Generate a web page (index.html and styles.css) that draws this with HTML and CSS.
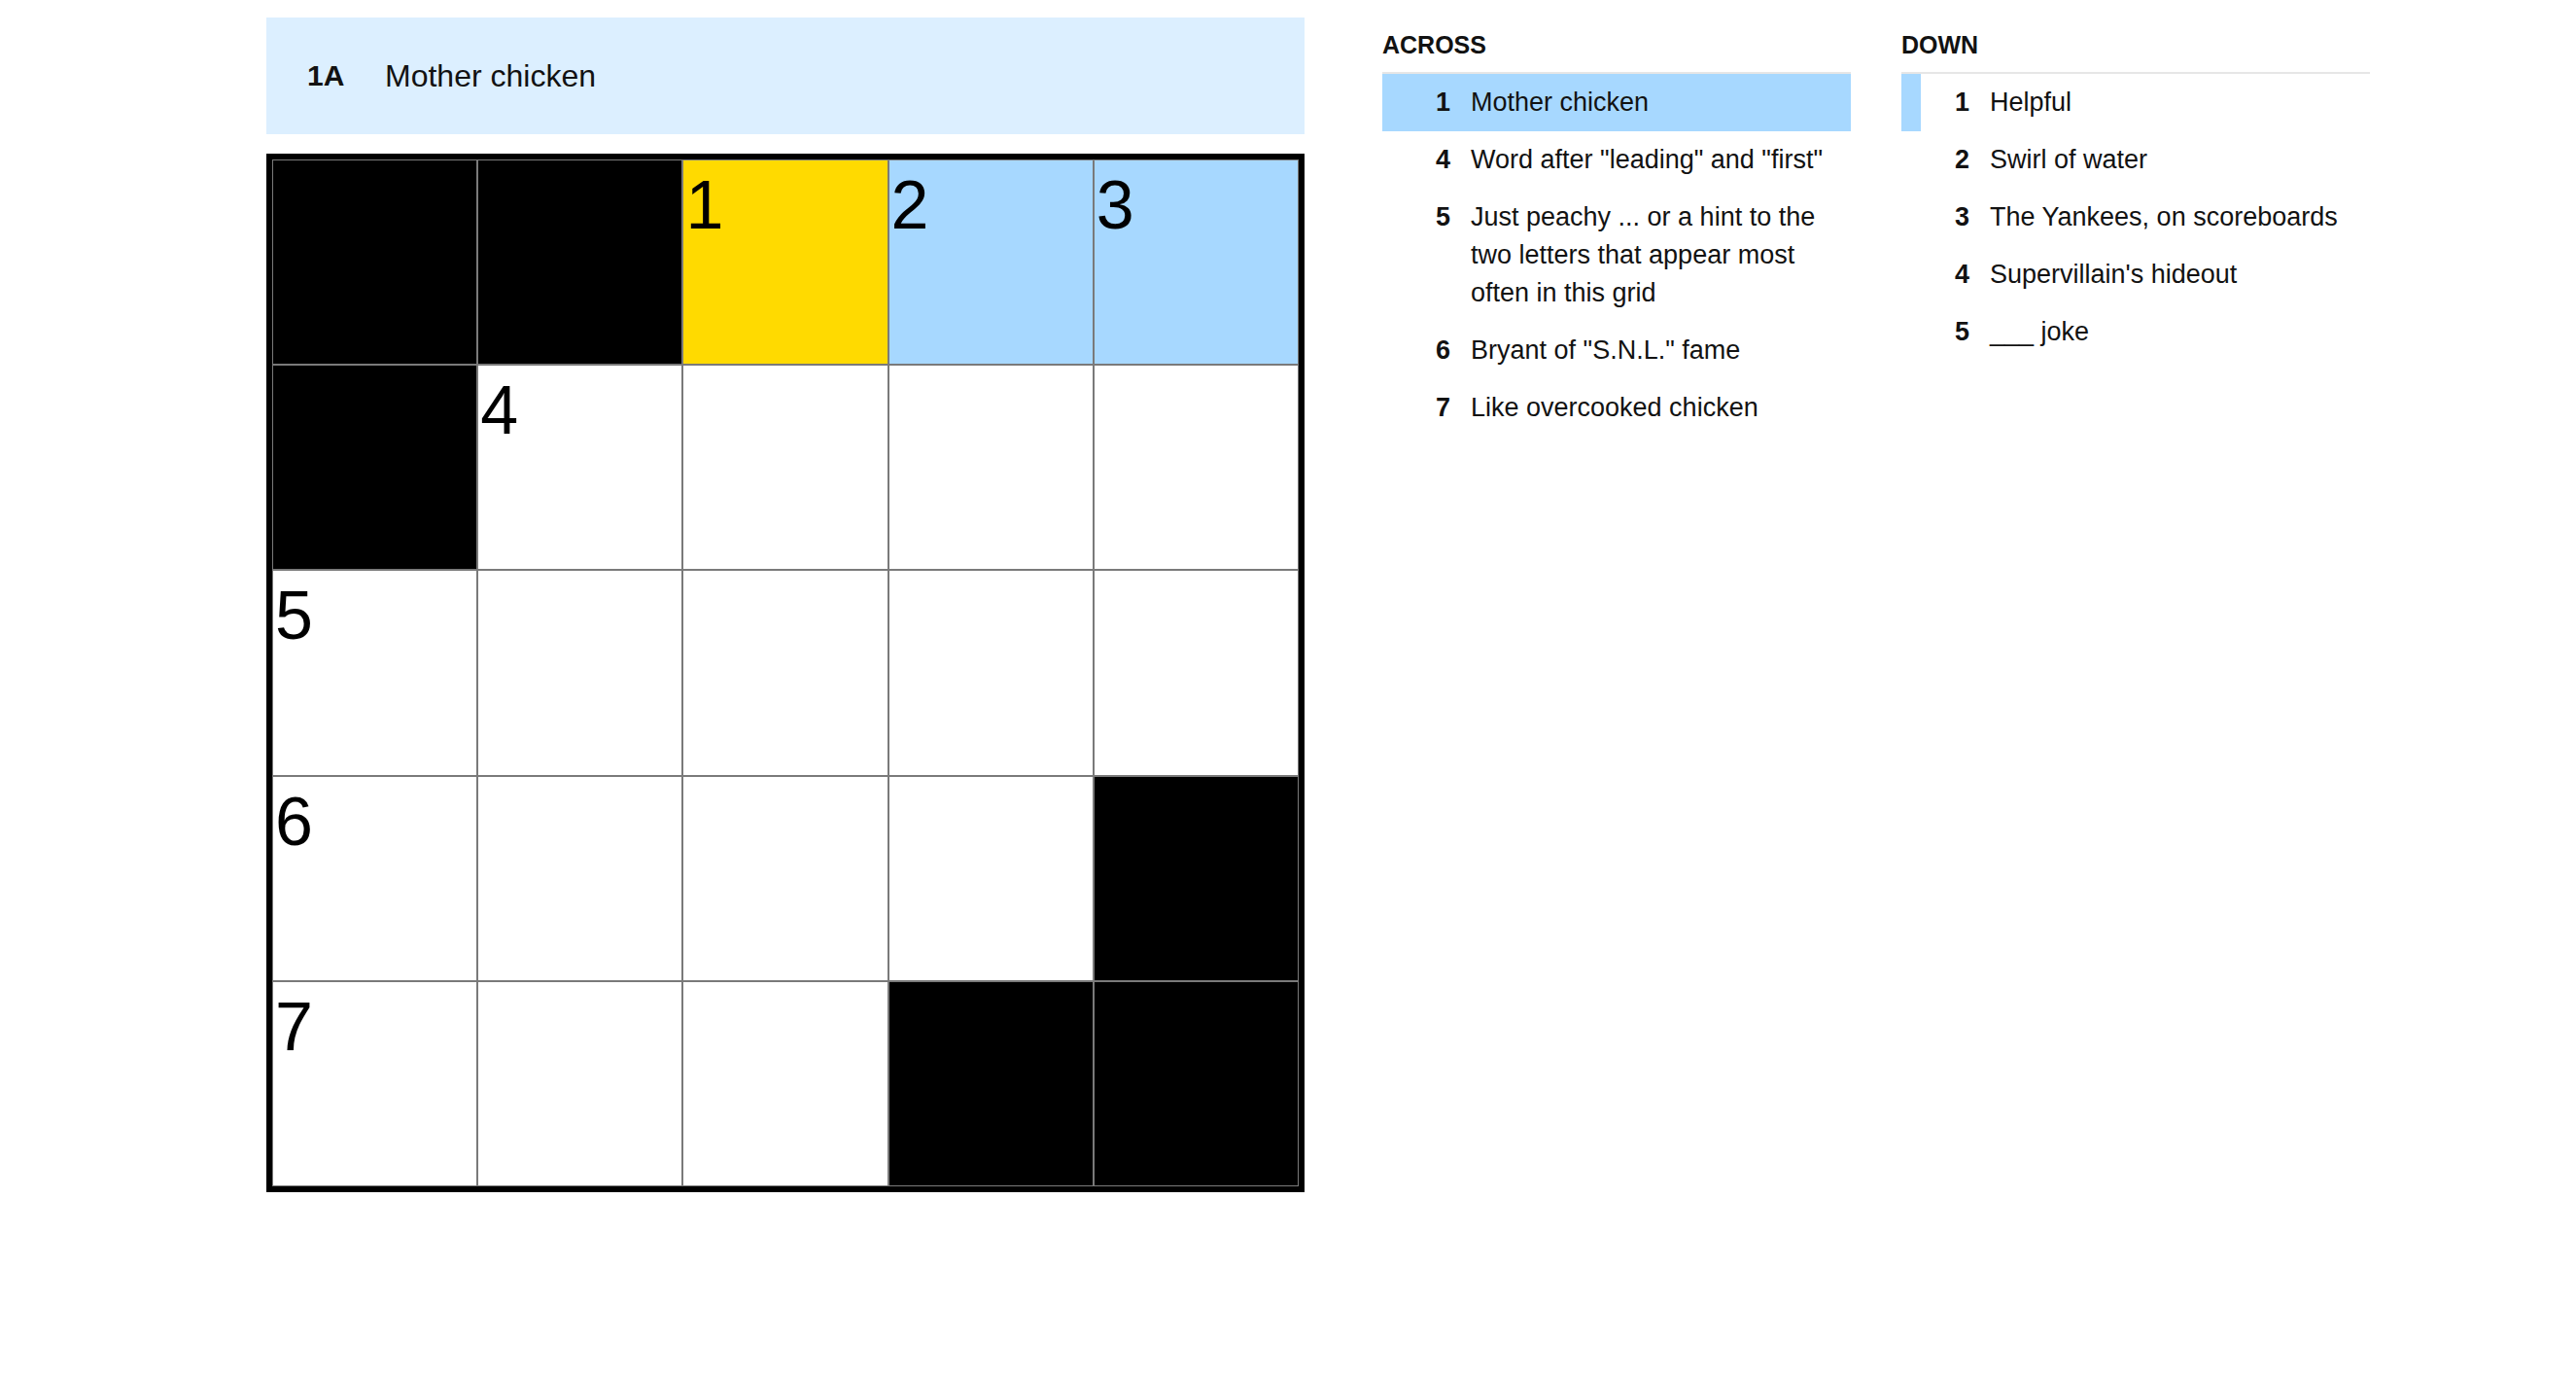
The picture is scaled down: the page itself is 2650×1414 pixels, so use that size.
FILE: index.html
```html
<!DOCTYPE html>
<html lang="en">
<head>
    <meta charset="UTF-8">
    <meta name="viewport" content="width=device-width, initial-scale=1.0">
    <title>The Mini Crossword</title>
    <link rel="stylesheet" href="styles.css">
</head>
<body>
    <div class="app">
        <div class="board">
            <div class="clue-bar">
                <span class="clue-bar-label">1A</span>
                <span class="clue-bar-text">Mother chicken</span>
            </div>
            <div class="grid">
                <div class="cell block"></div>
                <div class="cell block"></div>
                <div class="cell selected"><span class="cell-num">1</span></div>
                <div class="cell word"><span class="cell-num">2</span></div>
                <div class="cell word"><span class="cell-num">3</span></div>

                <div class="cell block"></div>
                <div class="cell"><span class="cell-num">4</span></div>
                <div class="cell"></div>
                <div class="cell"></div>
                <div class="cell"></div>

                <div class="cell"><span class="cell-num">5</span></div>
                <div class="cell"></div>
                <div class="cell"></div>
                <div class="cell"></div>
                <div class="cell"></div>

                <div class="cell"><span class="cell-num">6</span></div>
                <div class="cell"></div>
                <div class="cell"></div>
                <div class="cell"></div>
                <div class="cell block"></div>

                <div class="cell"><span class="cell-num">7</span></div>
                <div class="cell"></div>
                <div class="cell"></div>
                <div class="cell block"></div>
                <div class="cell block"></div>
            </div>
        </div>

        <section class="clue-list">
            <h3 class="clue-list-title">ACROSS</h3>
            <ol class="clue-items">
                <li class="clue selected"><span class="clue-num">1</span><span class="clue-text">Mother chicken</span></li>
                <li class="clue"><span class="clue-num">4</span><span class="clue-text">Word after "leading" and "first"</span></li>
                <li class="clue"><span class="clue-num">5</span><span class="clue-text">Just peachy ... or a hint to the two letters that appear most often in this grid</span></li>
                <li class="clue"><span class="clue-num">6</span><span class="clue-text">Bryant of "S.N.L." fame</span></li>
                <li class="clue"><span class="clue-num">7</span><span class="clue-text">Like overcooked chicken</span></li>
            </ol>
        </section>

        <section class="clue-list">
            <h3 class="clue-list-title">DOWN</h3>
            <ol class="clue-items">
                <li class="clue crossing"><span class="clue-num">1</span><span class="clue-text">Helpful</span></li>
                <li class="clue"><span class="clue-num">2</span><span class="clue-text">Swirl of water</span></li>
                <li class="clue"><span class="clue-num">3</span><span class="clue-text">The Yankees, on scoreboards</span></li>
                <li class="clue"><span class="clue-num">4</span><span class="clue-text">Supervillain's hideout</span></li>
                <li class="clue"><span class="clue-num">5</span><span class="clue-text">___ joke</span></li>
            </ol>
        </section>
    </div>
</body>
</html>
```

FILE: styles.css
```css
/* Mini crossword board + clue lists */
body {
    margin: 0;
    background: #fff;
    color: #121212;
    font-family: "Liberation Sans", Arial, sans-serif;
}
.app {
    display: flex;
    align-items: flex-start;
    gap: 80px;
    padding: 18px 0 0 274px;
}
.board {
    width: 1068px;
}

/* current clue banner */
.clue-bar {
    display: flex;
    align-items: center;
    height: 120px;
    padding-left: 42px;
    background-color: #dcefff;
}
.clue-bar-label {
    width: 80px;
    font-size: 30px;
    font-weight: bold;
}
.clue-bar-text {
    font-size: 32px;
}

/* grid */
.grid {
    display: grid;
    grid-template-columns: repeat(5, 1fr);
    grid-template-rows: repeat(5, 1fr);
    width: 1056px;
    height: 1056px;
    margin-top: 20px;
    border: 6px solid #000;
}
.cell {
    box-sizing: border-box;
    border: 1px solid #7a7a7a;
    background: #fff;
    padding: 11px 0 0 2px;
}
.cell.block {
    background: #000;
}
.cell.selected {
    background: #ffda00;
}
.cell.word {
    background: #a7d8ff;
}
.cell-num {
    display: block;
    font-size: 70px;
    line-height: 1;
    color: #000;
}

/* clue lists */
.clue-list {
    width: 482px;
}
.clue-list + .clue-list {
    margin-left: -28px;
}
.clue-list-title {
    margin: 13px 0;
    font-size: 25px;
    line-height: 30px;
    font-weight: bold;
}
.clue-items {
    list-style: none;
    margin: 0;
    padding: 0;
    border-top: 2px solid #e6e6e6;
}
.clue {
    display: flex;
    padding: 10px 12px 10px 0;
    font-size: 27px;
    line-height: 39px;
}
.clue.selected {
    background-color: #a7d8ff;
}
.clue.crossing {
    box-shadow: inset 20px 0 0 #a7d8ff;
}
.clue-num {
    flex: none;
    width: 70px;
    margin-right: 21px;
    text-align: right;
    font-weight: bold;
}
.clue-text {
    flex: 1;
}
```
